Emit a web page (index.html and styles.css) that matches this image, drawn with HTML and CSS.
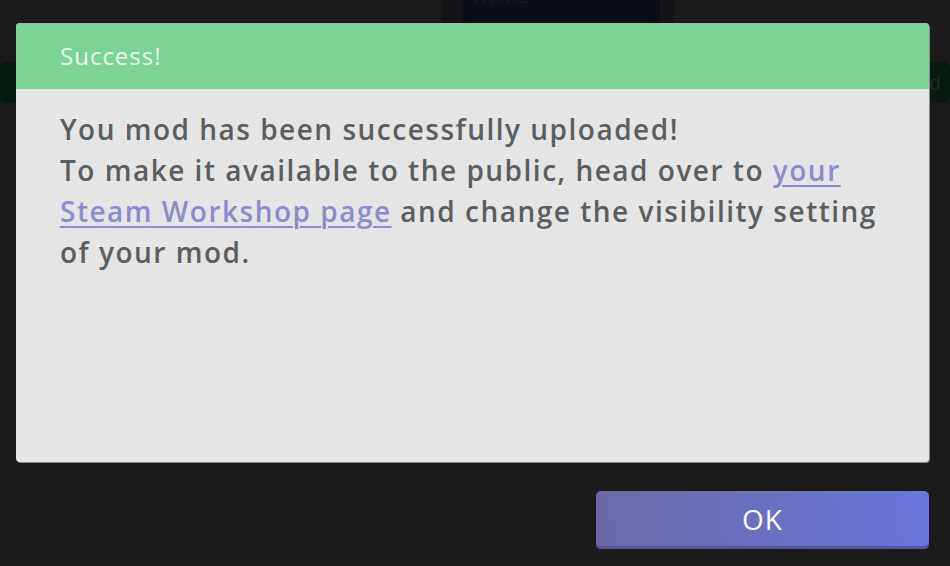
FILE: index.html
```html
<!DOCTYPE html>
<html lang="en">
<head>
    <meta charset="UTF-8">
    <meta name="viewport" content="width=device-width, initial-scale=1.0">
    <title>Upload complete</title>
    <link rel="stylesheet" href="styles.css">
</head>
<body>
    <div class="backdrop">
        <div class="thumb"><div class="thumb-inner"><span>France</span></div></div>
        <div class="status-bar"><span>d</span></div>
    </div>

    <div class="modal">
        <div class="dialog">
            <div class="dialog-header">Success!</div>
            <div class="dialog-body">
                <p>You mod has been successfully uploaded!<br>
                To make it available to the public, head over to <a href="#">your Steam Workshop page</a> and change the visibility setting of your mod.</p>
            </div>
        </div>
        <div class="actions">
            <button class="btn-ok">OK</button>
        </div>
    </div>
</body>
</html>
```

FILE: styles.css
```css
body {
    margin: 0;
    background-color: #1b1b1b;
    font-family: "Open Sans", Lato, sans-serif;
    width: 950px;
    height: 566px;
    overflow: hidden;
    position: relative;
}
/* things behind the dialog */
.backdrop {
    position: absolute;
    inset: 0;
}
.thumb {
    position: absolute;
    left: 441px;
    top: -20px;
    width: 234px;
    height: 44px;
    background: #141419;
    padding: 0 15px 0 22px;
    box-sizing: border-box;
}
.thumb-inner {
    height: 100%;
    background: #0c0e17;
}
.thumb-inner span {
    display: block;
    padding: 4px 0 0 10px;
    color: #161a27;
    font-size: 18px;
}
.status-bar {
    position: absolute;
    left: 0;
    right: 0;
    top: 62px;
    height: 41px;
    background: #061a10;
    border-radius: 6px;
}
.status-bar span {
    position: absolute;
    right: 9px;
    top: 7px;
    color: #262827;
    font-size: 20px;
}
.modal {
    position: relative;
    padding: 23px 21px 0 16px;
    display: flex;
    flex-direction: column;
}
.dialog {
    border-radius: 4px;
    overflow: hidden;
    background: #e5e5e5;
    box-shadow: 1px 1px 0 #8a8a8a;
    height: 439px;
    display: flex;
    flex-direction: column;
}
.dialog-header {
    background: #7bd396;
    color: #eef9ef;
    font-size: 24px;
    letter-spacing: 1px;
    height: 66px;
    line-height: 66px;
    padding-left: 44px;
}
.dialog-body {
    padding: 20px 40px 18px 44px;
}
.dialog-body p {
    margin: 0;
    font-size: 28px;
    font-weight: 600;
    letter-spacing: 1.5px;
    line-height: 41px;
    color: #5b5e60;
}
.dialog-body a {
    color: #8c8ccc;
    text-decoration: underline;
    text-decoration-thickness: 2px;
    text-underline-offset: 4px;
}
.actions {
    display: flex;
    justify-content: flex-end;
    margin-top: 29px;
}
.btn-ok {
    width: 333px;
    height: 58px;
    border: none;
    border-radius: 5px;
    background: linear-gradient(80deg, #6b69a6, #6b76dc);
    box-shadow: inset 0 -3px 0 #575596;
    color: #ffffff;
    font-family: inherit;
    font-size: 28px;
    letter-spacing: 1px;
    padding: 0 0 3px;
    cursor: pointer;
}
```
